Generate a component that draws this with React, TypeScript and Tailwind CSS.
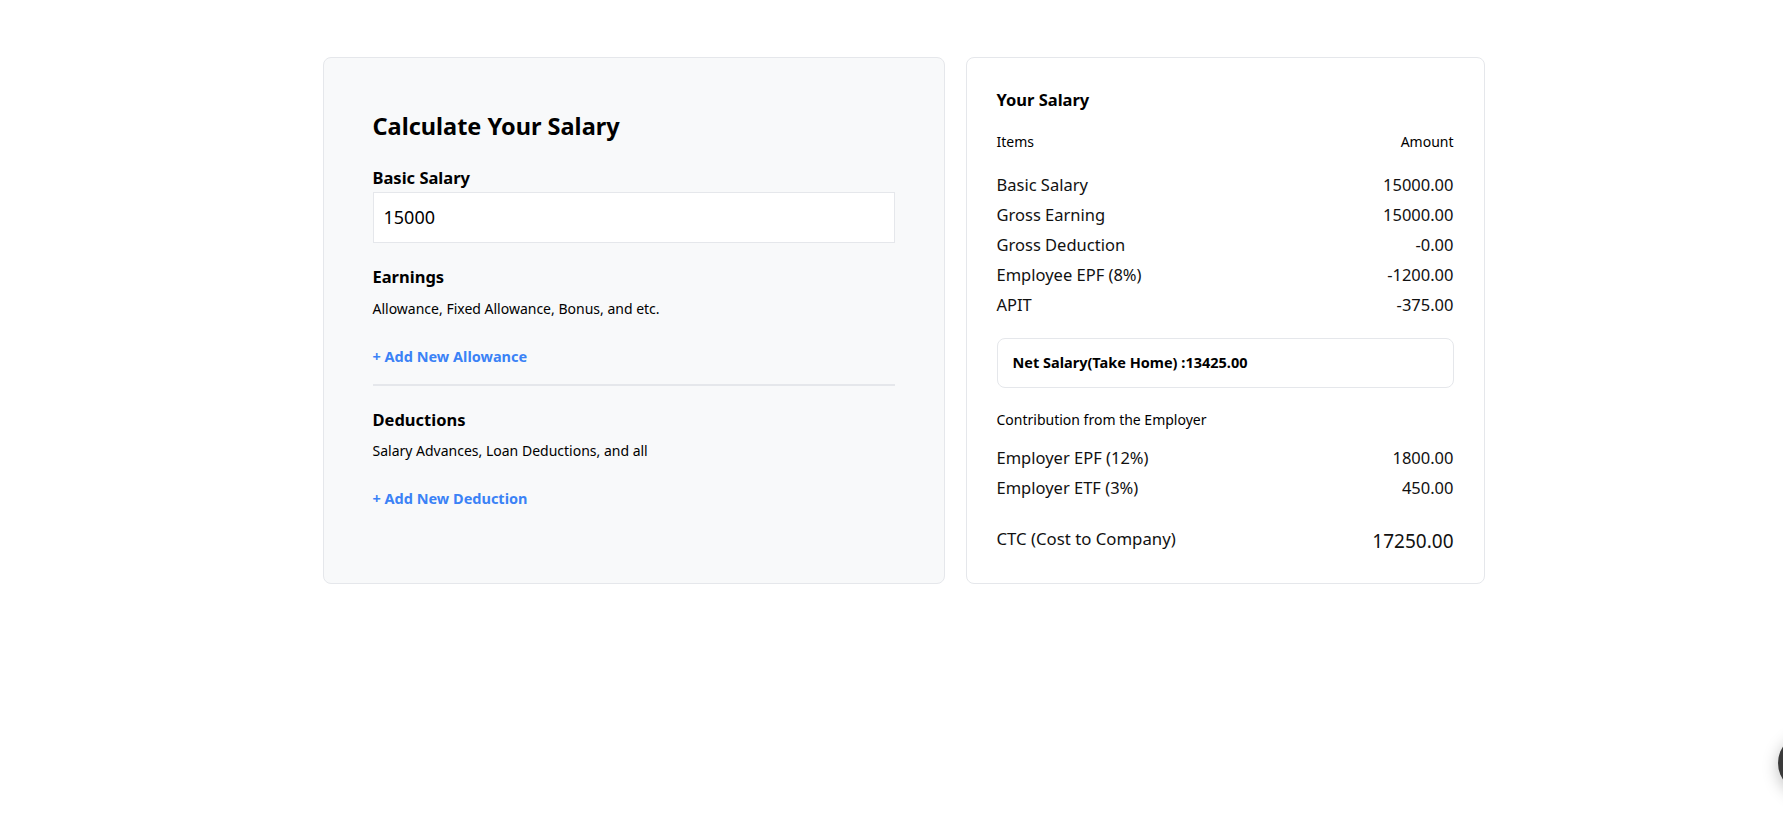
import React from "react";

const font = { fontFamily: '"Noto Sans", "Open Sans", sans-serif' };

function Row({ label, value }: { label: string; value: string }) {
  return (
    <div className="flex h-[30px] items-center justify-between text-[16.5px] text-[#111]">
      <span>{label}</span>
      <span>{value}</span>
    </div>
  );
}

export default function App() {
  return (
    <div className="min-h-[839px] bg-white" style={font}>
      <div className="flex justify-center gap-[21px] pl-[24px] pt-[57px]">
        {/* Left card */}
        <div className="w-[622px] h-[527px] rounded-lg border border-[#e5e7eb] bg-[#f8f9fa] px-[49px] pt-[52px]">
          <h2 className="text-[23.5px] leading-[32px] font-bold text-black">Calculate Your Salary</h2>
          <div className="mt-[24px] text-[16.5px] leading-[24px] font-bold text-black">Basic Salary</div>
          <div className="mt-[2px] flex h-[51px] items-center border border-[#e5e7eb] bg-white px-[10px] text-[18px] text-black">
            15000
          </div>
          <div className="mt-[22px] text-[16.5px] leading-[24px] font-bold text-black">Earnings</div>
          <div className="mt-[10px] text-[14px] leading-[20px] text-black">Allowance, Fixed Allowance, Bonus, and etc.</div>
          <div className="mt-[27px] text-[14.5px] leading-[20px] font-bold text-[#3b82f6]">+ Add New Allowance</div>
          <div className="mt-[18px] border-t-2 border-[#e5e7eb]" />
          <div className="mt-[22px] text-[16.5px] leading-[24px] font-bold text-black">Deductions</div>
          <div className="mt-[9px] text-[14px] leading-[20px] text-black">Salary Advances, Loan Deductions, and all</div>
          <div className="mt-[27px] text-[14.5px] leading-[20px] font-bold text-[#3b82f6]">+ Add New Deduction</div>
        </div>

        {/* Right card */}
        <div className="w-[519px] h-[527px] rounded-lg border border-[#e5e7eb] bg-white px-[30px] pt-[30px]">
          <div className="text-[16.5px] leading-[24px] font-bold text-black">Your Salary</div>
          <div className="mt-[20px] flex justify-between text-[14px] leading-[20px] text-black">
            <span>Items</span>
            <span>Amount</span>
          </div>
          <div className="mt-[18px]">
            <Row label="Basic Salary" value="15000.00" />
            <Row label="Gross Earning" value="15000.00" />
            <Row label="Gross Deduction" value="-0.00" />
            <Row label="Employee EPF (8%)" value="-1200.00" />
            <Row label="APIT" value="-375.00" />
          </div>
          <div className="mt-[18px] flex h-[50px] items-center rounded-lg border border-[#e5e7eb] px-[15px] text-[14.5px] font-bold text-black">
            Net Salary(Take Home) :13425.00
          </div>
          <div className="mt-[22px] text-[14px] leading-[20px] text-black">Contribution from the Employer</div>
          <div className="mt-[13px]">
            <Row label="Employer EPF (12%)" value="1800.00" />
            <Row label="Employer ETF (3%)" value="450.00" />
          </div>
          <div className="mt-[23px] flex h-[30px] items-center justify-between text-[#111]">
            <span className="mb-[4px] text-[16.75px]">CTC (Cost to Company)</span>
            <span className="text-[19px]">17250.00</span>
          </div>
        </div>
      </div>

      <div className="fixed left-[1778px] top-[733px] h-[60px] w-[60px] rounded-full bg-[#3a3a3a] shadow-[0_4px_16px_rgba(0,0,0,0.25)]" />
    </div>
  );
}
